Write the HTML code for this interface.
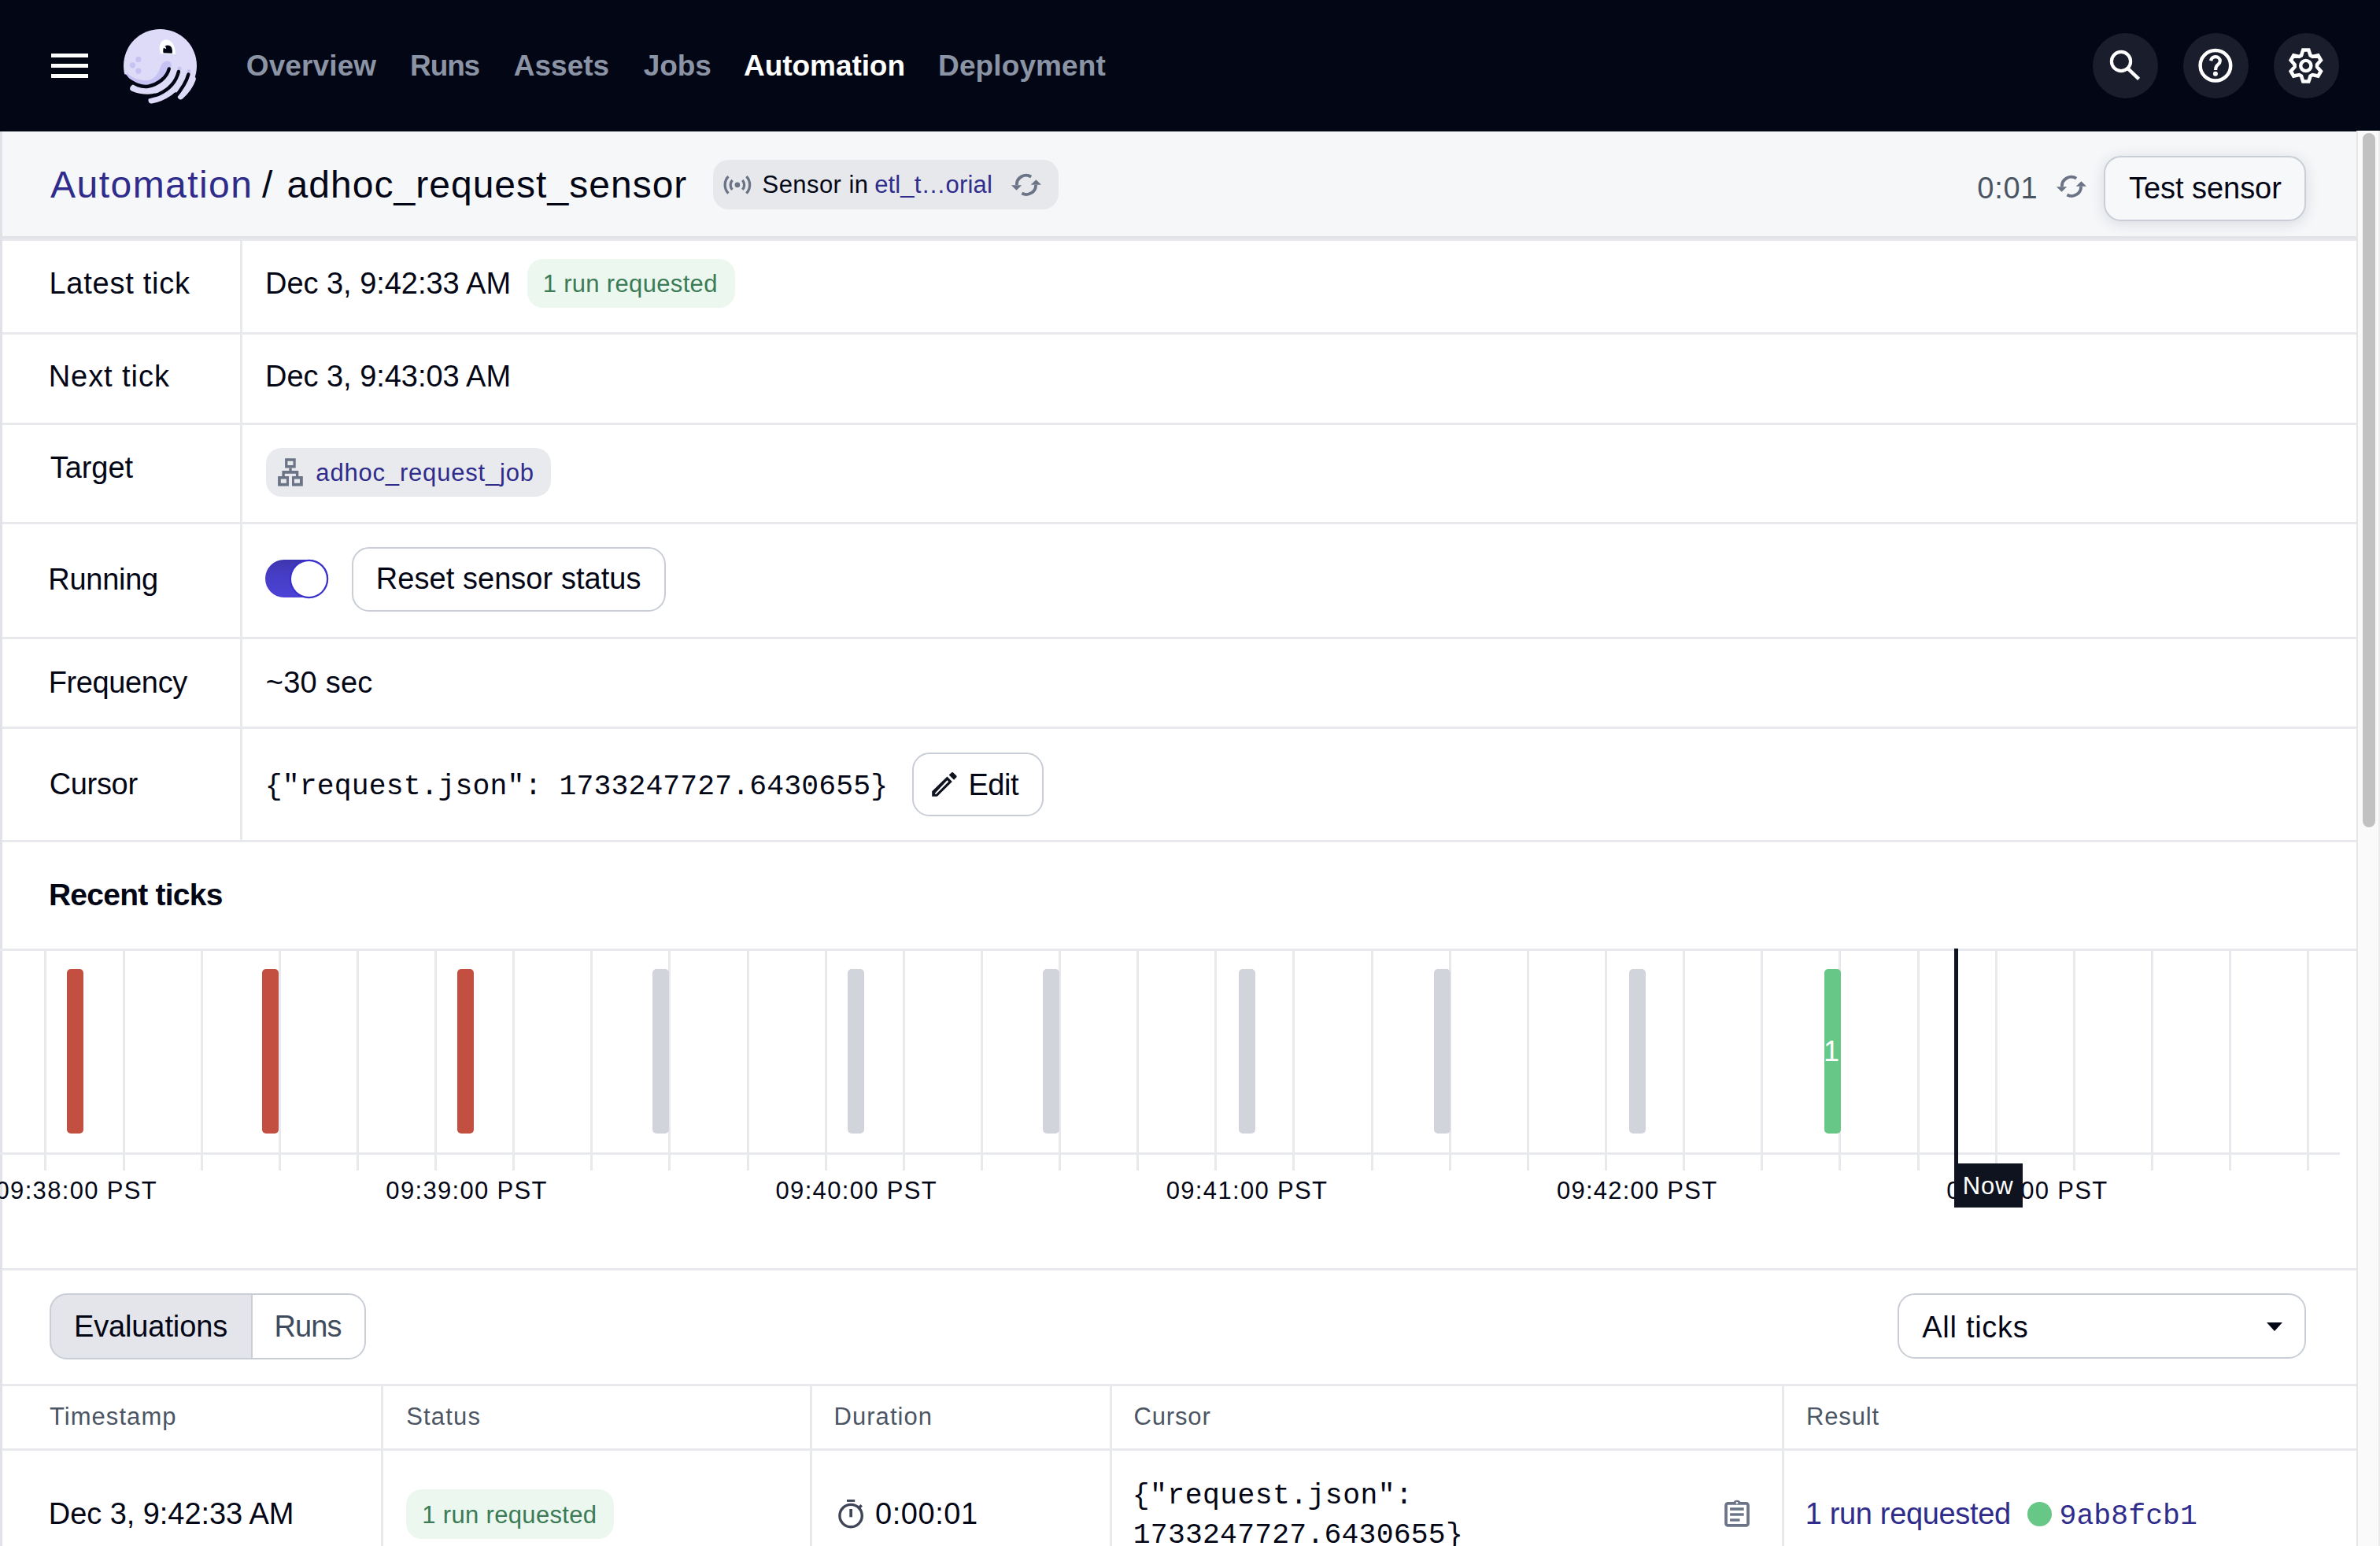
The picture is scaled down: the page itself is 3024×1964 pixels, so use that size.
<!DOCTYPE html>
<html><head><meta charset="utf-8"><title>adhoc_request_sensor</title><style>html,body{margin:0;padding:0;}
body{width:3024px;height:1964px;overflow:hidden;position:relative;background:#fff;}
.b{position:absolute;}
.t{position:absolute;white-space:pre;line-height:1;}
</style></head><body>
<div class="b" style="left:0px;top:0px;width:3024px;height:167px;background:#030615"></div>
<div class="b" style="left:65px;top:68px;width:47px;height:5px;background:#fff"></div>
<div class="b" style="left:65px;top:81px;width:47px;height:5px;background:#fff"></div>
<div class="b" style="left:65px;top:94px;width:47px;height:5px;background:#fff"></div>
<svg class="b" style="left:150px;top:30px" width="110" height="110" viewBox="0 0 110 110">
<circle cx="53.5" cy="53.5" r="46.5" fill="#dddbf8"/>
<path d="M11,62 C18,70 28,72 36,72 C46,72 51,64 54,55 C56,49 60,47.5 63,47.5 C67,47.5 68.5,51 67.5,56 L64.8,56.2 C62,70 50,79 36,79 C24,79 15,74 11,70 Z" fill="#c6c2f3"/>
<circle cx="25.8" cy="45.4" r="3.6" fill="#c6c2f3"/>
<circle cx="18.5" cy="52.8" r="3.6" fill="#c6c2f3"/>
<circle cx="25.8" cy="60.2" r="3.6" fill="#c6c2f3"/>
<circle cx="78" cy="57" r="2.6" fill="#c6c2f3"/>
<circle cx="90" cy="60.5" r="2.6" fill="#c6c2f3"/>
<path d="M0,64 L10,64.5 L17,73 L19,77 L12,86 L0,100 Z M6,82 L17,84 L28,87 L40,88 L48,87.5 L42,95 L36,100 L20,110 L0,110 Z M38,103 L44,99.5 L55.4,95.8 L66.7,90.5 L73,87 L77,90 L76,96 L70,110 L38,110 Z" fill="#030615"/>
<path d="M19,82.3 C24,84.5 30,86 38,86 C50,86 62,79 70,66" stroke="#dddbf8" stroke-width="7.6" fill="none" stroke-linecap="round"/>
<path d="M42.5,97.5 C50,96.5 58,93 66,87.5 C74,81 80,73 84,63" stroke="#dddbf8" stroke-width="8" fill="none" stroke-linecap="round"/>
<path d="M79.5,92.5 C86,87 92,79 95,70.5" stroke="#dddbf8" stroke-width="7.6" fill="none" stroke-linecap="round"/>
<path d="M64.8,57.5 C62,68 52,77 38,79.8 C30,81 22,78 8,68" stroke="#030615" stroke-width="4.4" fill="none" stroke-linecap="round"/>
<path d="M76.9,61 C74,73 66,83 52,89.5 C46,92 40,93 30,95" stroke="#030615" stroke-width="4.4" fill="none" stroke-linecap="round"/>
<path d="M89.4,64.5 C87,74 82,82 72,94" stroke="#030615" stroke-width="4.4" fill="none" stroke-linecap="round"/>
<path d="M54,38.2 C51,31 53,20.6 61,20.6 C68,20.6 73,28 72.8,39 Z" fill="#ffffff"/>
<path d="M57.5,37.3 C56.5,31 58.5,27.4 63,27.4 C67.5,27.4 69.5,31.5 68.8,37.7 Z" fill="#030615"/>
<path d="M57.2,30.5 L60,28.2 L61.3,32.3 Z" fill="#ffffff"/>
</svg>
<div class="b" style="left:2659px;top:42px;width:83px;height:83px;background:#1a1d2b;border-radius:50%"></div>
<div class="b" style="left:2774px;top:42px;width:83px;height:83px;background:#1a1d2b;border-radius:50%"></div>
<div class="b" style="left:2888.5px;top:42px;width:83px;height:83px;background:#1a1d2b;border-radius:50%"></div>
<svg class="b" style="left:2660px;top:45px" width="200" height="80" viewBox="0 0 200 80">
<circle cx="35" cy="33" r="12.1" stroke="#fff" stroke-width="4.2" fill="none"/>
<path d="M44.2,42.6 L57.6,55.4" stroke="#fff" stroke-width="4.4"/>
<circle cx="154.9" cy="38.2" r="19.3" stroke="#fff" stroke-width="4.5" fill="none"/>
<path d="M149.1,32.2 C149.8,29 152.1,27.2 155,27.2 C158.4,27.2 160.8,29.5 160.8,32.4 C160.8,35.6 158,36.9 156.4,38.9 C155.4,40.1 155.1,41.3 155.1,43.9" stroke="#fff" stroke-width="4.2" fill="none"/>
<circle cx="154.9" cy="48.8" r="3.0" fill="#fff"/></svg>
<svg class="b" style="left:2890px;top:45px" width="80" height="80" viewBox="0 0 80 80">
<path d="M33.98,25.44 L36.27,18.51 L43.33,18.51 L45.62,25.44 L48.21,26.93 L55.35,25.45 L58.88,31.56 L54.02,37.01 L54.02,39.99 L58.88,45.44 L55.35,51.55 L48.21,50.07 L45.62,51.56 L43.33,58.49 L36.27,58.49 L33.98,51.56 L31.39,50.07 L24.25,51.55 L20.72,45.44 L25.58,39.99 L25.58,37.01 L20.72,31.56 L24.25,25.45 L31.39,26.93 Z" stroke="#fff" stroke-width="4.6" fill="none"/>
<circle cx="39.8" cy="38.5" r="6.6" stroke="#fff" stroke-width="4.4" fill="none"/></svg>
<div class="b" style="left:0px;top:167px;width:2994px;height:136px;background:#f6f7f9"></div>
<div class="b" style="left:0px;top:300px;width:2994px;height:3px;background:#e1e3e8"></div>
<div class="b" style="left:0px;top:303px;width:2994px;height:3px;background:#e6e8ec"></div>
<div class="b" style="left:906px;top:203px;width:439px;height:63px;background:#e6e8ec;border-radius:20px"></div>
<svg class="b" style="left:910px;top:210px" width="54" height="50" viewBox="0 0 54 50">
<circle cx="26.9" cy="24.9" r="3.3" fill="#6b7486"/>
<path d="M15.4,14.2 A15.7,15.7 0 0 0 15.4,35.6 M38.4,14.2 A15.7,15.7 0 0 1 38.4,35.6 M20.5,18.9 A8.8,8.8 0 0 0 20.5,30.9 M33.3,18.9 A8.8,8.8 0 0 1 33.3,30.9" stroke="#6b7486" stroke-width="3.3" fill="none"/></svg>
<svg class="b" style="left:1271.5px;top:208.1px" width="60" height="50" viewBox="0 0 60 50">
<path d="M38.2,16.6 A12,12 0 0 0 19.8,26.9 M26.4,37.5 A12,12 0 0 0 44.1,26.9" stroke="#6b7486" stroke-width="3.8" fill="none"/>
<path d="M12.9,27.2 L26.2,27.2 L19.5,33.8 Z M37.7,26.7 L51,26.7 L44.4,20.2 Z" fill="#6b7486"/></svg>
<svg class="b" style="left:2600px;top:210px" width="60" height="50" viewBox="0 0 60 50">
<path d="M38.2,16.6 A12,12 0 0 0 19.8,26.9 M26.4,37.5 A12,12 0 0 0 44.1,26.9" stroke="#6b7486" stroke-width="3.8" fill="none"/>
<path d="M12.9,27.2 L26.2,27.2 L19.5,33.8 Z M37.7,26.7 L51,26.7 L44.4,20.2 Z" fill="#6b7486"/></svg>
<div class="b" style="left:2673.4px;top:198.2px;width:256.6px;height:83px;box-sizing:border-box;border:2.6px solid #c9ced6;border-radius:22px;background:#f7f8fa;box-shadow:0 3px 18px rgba(30,40,70,0.14)"></div>
<div class="b" style="left:2994px;top:166px;width:30px;height:1798px;background:#fafafa;border-left:2px solid #e6e6e6;border-right:2px solid #ebebeb;box-sizing:border-box"></div>
<div class="b" style="left:3002px;top:169px;width:16px;height:882px;background:#c1c1c1;border-radius:8px"></div>
<div class="b" style="left:0px;top:167px;width:2.7px;height:1797px;background:#e0e2e7"></div>
<div class="b" style="left:3px;top:422px;width:2991px;height:3px;background:#e8e9ed"></div>
<div class="b" style="left:3px;top:537px;width:2991px;height:3px;background:#e8e9ed"></div>
<div class="b" style="left:3px;top:663px;width:2991px;height:3px;background:#e8e9ed"></div>
<div class="b" style="left:3px;top:809px;width:2991px;height:3px;background:#e8e9ed"></div>
<div class="b" style="left:3px;top:923px;width:2991px;height:3px;background:#e8e9ed"></div>
<div class="b" style="left:3px;top:1067px;width:2991px;height:3px;background:#e8e9ed"></div>
<div class="b" style="left:305px;top:303px;width:3px;height:765px;background:#e8e9ed"></div>
<div class="b" style="left:670px;top:328.8px;width:264px;height:62px;background:#ebf7ef;border-radius:20px"></div>
<div class="b" style="left:338.2px;top:569px;width:362px;height:61.6px;background:#e9eaee;border-radius:20px"></div>
<svg class="b" style="left:345px;top:575px" width="50" height="50" viewBox="0 0 50 50">
<path fill-rule="evenodd" fill="#6b7486" d="M17.1,7.3 H30.7 V19.6 H17.1 Z M20.4,10.8 V16 H27.5 V10.8 Z M8.1,30.1 H22 V42.4 H8.1 Z M11.8,33.6 V38.8 H18.9 V33.6 Z M26,30.1 H39.8 V42.4 H26 Z M28.9,33.6 V38.8 H36 V33.6 Z"/>
<path fill="#6b7486" d="M22.3,19.4 H25.7 V23.1 H34.3 V30.3 H30.9 V26.7 H16.8 V30.3 H13.4 V23.1 H22.3 Z"/></svg>
<div class="b" style="left:336.8px;top:710.9px;width:80.2px;height:48.6px;background:linear-gradient(180deg,#3d35ae 0%,#463dc6 40%,#4c42d6 100%);border-radius:25px"></div>
<div class="b" style="left:369.8px;top:712.9px;width:45px;height:45px;background:#fff;border-radius:50%;box-shadow:0 0 0 2.2px #3a30cc"></div>
<div class="b" style="left:447.4px;top:694.5px;width:398.3px;height:82px;box-sizing:border-box;border:2.6px solid #c9ced6;border-radius:22px;background:#fff"></div>
<div class="b" style="left:1158.9px;top:955.6px;width:167.6px;height:81.8px;box-sizing:border-box;border:2.6px solid #c9ced6;border-radius:22px;background:#fff"></div>
<svg class="b" style="left:1175px;top:975px" width="50" height="50" viewBox="0 0 50 50">
<path fill-rule="evenodd" fill="#0f1320" d="M9.2,36.7 V30.2 L28.5,11.5 L34.8,17.9 L15.8,36.7 Z M12.8,33.1 L28.5,16.3 L30.2,17.9 L14,34.2 Z"/>
<path fill="#0f1320" d="M30.7,9.6 L34.3,6.2 Q35.1,5.6 35.9,6.3 L40.3,10.6 Q40.9,11.4 40.3,12.2 L37.1,15.8 Z"/></svg>
<div class="b" style="left:0px;top:1205px;width:2994px;height:3px;background:#e8e9ed"></div>
<div class="b" style="left:0px;top:1464px;width:2973px;height:3px;background:#e8e9ed"></div>
<div class="b" style="left:56px;top:1206px;width:3px;height:281px;background:#e8e9ed"></div>
<div class="b" style="left:156px;top:1206px;width:3px;height:281px;background:#e8e9ed"></div>
<div class="b" style="left:255px;top:1206px;width:3px;height:281px;background:#e8e9ed"></div>
<div class="b" style="left:354px;top:1206px;width:3px;height:281px;background:#e8e9ed"></div>
<div class="b" style="left:453px;top:1206px;width:3px;height:281px;background:#e8e9ed"></div>
<div class="b" style="left:552px;top:1206px;width:3px;height:281px;background:#e8e9ed"></div>
<div class="b" style="left:651px;top:1206px;width:3px;height:281px;background:#e8e9ed"></div>
<div class="b" style="left:750px;top:1206px;width:3px;height:281px;background:#e8e9ed"></div>
<div class="b" style="left:849px;top:1206px;width:3px;height:281px;background:#e8e9ed"></div>
<div class="b" style="left:949px;top:1206px;width:3px;height:281px;background:#e8e9ed"></div>
<div class="b" style="left:1048px;top:1206px;width:3px;height:281px;background:#e8e9ed"></div>
<div class="b" style="left:1147px;top:1206px;width:3px;height:281px;background:#e8e9ed"></div>
<div class="b" style="left:1246px;top:1206px;width:3px;height:281px;background:#e8e9ed"></div>
<div class="b" style="left:1345px;top:1206px;width:3px;height:281px;background:#e8e9ed"></div>
<div class="b" style="left:1444px;top:1206px;width:3px;height:281px;background:#e8e9ed"></div>
<div class="b" style="left:1543px;top:1206px;width:3px;height:281px;background:#e8e9ed"></div>
<div class="b" style="left:1642px;top:1206px;width:3px;height:281px;background:#e8e9ed"></div>
<div class="b" style="left:1742px;top:1206px;width:3px;height:281px;background:#e8e9ed"></div>
<div class="b" style="left:1841px;top:1206px;width:3px;height:281px;background:#e8e9ed"></div>
<div class="b" style="left:1940px;top:1206px;width:3px;height:281px;background:#e8e9ed"></div>
<div class="b" style="left:2039px;top:1206px;width:3px;height:281px;background:#e8e9ed"></div>
<div class="b" style="left:2138px;top:1206px;width:3px;height:281px;background:#e8e9ed"></div>
<div class="b" style="left:2237px;top:1206px;width:3px;height:281px;background:#e8e9ed"></div>
<div class="b" style="left:2336px;top:1206px;width:3px;height:281px;background:#e8e9ed"></div>
<div class="b" style="left:2436px;top:1206px;width:3px;height:281px;background:#e8e9ed"></div>
<div class="b" style="left:2535px;top:1206px;width:3px;height:281px;background:#e8e9ed"></div>
<div class="b" style="left:2634px;top:1206px;width:3px;height:281px;background:#e8e9ed"></div>
<div class="b" style="left:2733px;top:1206px;width:3px;height:281px;background:#e8e9ed"></div>
<div class="b" style="left:2832px;top:1206px;width:3px;height:281px;background:#e8e9ed"></div>
<div class="b" style="left:2931px;top:1206px;width:3px;height:281px;background:#e8e9ed"></div>
<div class="b" style="left:84.9px;top:1231px;width:21px;height:209px;background:#c24f3f;border-radius:5px"></div>
<div class="b" style="left:333.0px;top:1231px;width:21px;height:209px;background:#c24f3f;border-radius:5px"></div>
<div class="b" style="left:581.1px;top:1231px;width:21px;height:209px;background:#c24f3f;border-radius:5px"></div>
<div class="b" style="left:829.2px;top:1231px;width:21px;height:209px;background:#d1d4db;border-radius:5px"></div>
<div class="b" style="left:1077.3px;top:1231px;width:21px;height:209px;background:#d1d4db;border-radius:5px"></div>
<div class="b" style="left:1325.4px;top:1231px;width:21px;height:209px;background:#d1d4db;border-radius:5px"></div>
<div class="b" style="left:1573.5px;top:1231px;width:21px;height:209px;background:#d1d4db;border-radius:5px"></div>
<div class="b" style="left:1821.6px;top:1231px;width:21px;height:209px;background:#d1d4db;border-radius:5px"></div>
<div class="b" style="left:2069.7px;top:1231px;width:21px;height:209px;background:#d1d4db;border-radius:5px"></div>
<div class="b" style="left:2317.8px;top:1231px;width:21px;height:209px;background:#67c787;border-radius:5px"></div>
<div class="t" style="left:2317px;top:1318px;font-family:'Liberation Sans';font-size:36px;color:#fff">1</div>
<div class="b" style="left:2482.8px;top:1205px;width:5.2px;height:273px;background:#0f1320;z-index:2"></div>
<div class="b" style="left:2482.8px;top:1477.6px;width:87px;height:56px;background:#0f1320;z-index:2"></div>
<div class="b" style="left:3px;top:1611px;width:2991px;height:3px;background:#e8e9ed"></div>
<div class="b" style="left:63.2px;top:1643px;width:402.3px;height:84px;box-sizing:border-box;border:2.6px solid #c9ced6;border-radius:22px;background:linear-gradient(90deg,#e3e5ea 0,#e3e5ea 253.5px,#c9ced6 253.5px,#c9ced6 256.3px,#fff 256.3px)"></div>
<div class="b" style="left:2410.6px;top:1643.3px;width:519.4px;height:83px;box-sizing:border-box;border:2.6px solid #c9ced6;border-radius:22px;background:#fff"></div>
<svg class="b" style="left:2878px;top:1678px" width="24" height="16" viewBox="0 0 24 16"><path d="M2,2 H22 L12,13 Z" fill="#030615"/></svg>
<div class="b" style="left:3px;top:1758px;width:2991px;height:3px;background:#e8e9ed"></div>
<div class="b" style="left:3px;top:1840px;width:2991px;height:3px;background:#e8e9ed"></div>
<div class="b" style="left:484px;top:1759px;width:3px;height:205px;background:#e8e9ed"></div>
<div class="b" style="left:1029px;top:1759px;width:3px;height:205px;background:#e8e9ed"></div>
<div class="b" style="left:1410px;top:1759px;width:3px;height:205px;background:#e8e9ed"></div>
<div class="b" style="left:2264px;top:1759px;width:3px;height:205px;background:#e8e9ed"></div>
<div class="b" style="left:516.1px;top:1891.8px;width:263.7px;height:63px;background:#ebf7ef;border-radius:20px"></div>
<svg class="b" style="left:1055px;top:1895px" width="50" height="50" viewBox="0 0 50 50">
<circle cx="26.1" cy="30.6" r="14.2" stroke="#3f4657" stroke-width="3.4" fill="none"/>
<rect x="21" y="10" width="10.2" height="2.9" fill="#3f4657"/>
<rect x="24.3" y="22" width="3.7" height="10.3" fill="#3f4657"/>
<path d="M38.5,16 L40.9,18.6 L38.3,21.3 L35.6,18.8 Z" fill="#3f4657"/></svg>
<svg class="b" style="left:2180px;top:1895px" width="50" height="50" viewBox="0 0 50 50">
<rect x="13.05" y="14.95" width="28" height="28" rx="2.5" stroke="#6b7486" stroke-width="3.7" fill="none"/>
<path d="M22,14.5 A5.2,5.2 0 0 1 32,14.5 Z" fill="#6b7486"/>
<circle cx="27" cy="14.2" r="1.3" fill="#fff"/>
<rect x="18.1" y="20.2" width="17.6" height="3.6" fill="#6b7486"/>
<rect x="18.1" y="27.3" width="17.6" height="3.4" fill="#6b7486"/>
<rect x="18.1" y="34.3" width="12.5" height="3.4" fill="#6b7486"/></svg>
<div class="b" style="left:2575.6px;top:1908px;width:31px;height:31px;background:#67c787;border-radius:50%"></div>
<div class="t" id="nav1" style="left:312.78px;top:65.15px;font-family:'Liberation Sans', sans-serif;font-weight:700;font-size:37px;color:#8b94a5;letter-spacing:0.114px">Overview</div>
<div class="t" id="nav2" style="left:521.08px;top:65.15px;font-family:'Liberation Sans', sans-serif;font-weight:700;font-size:37px;color:#8b94a5;letter-spacing:-1.133px">Runs</div>
<div class="t" id="nav3" style="left:652.78px;top:65.15px;font-family:'Liberation Sans', sans-serif;font-weight:700;font-size:37px;color:#8b94a5;letter-spacing:0.000px">Assets</div>
<div class="t" id="nav4" style="left:817.78px;top:65.15px;font-family:'Liberation Sans', sans-serif;font-weight:700;font-size:37px;color:#8b94a5;letter-spacing:-0.067px">Jobs</div>
<div class="t" id="nav5" style="left:945.08px;top:65.15px;font-family:'Liberation Sans', sans-serif;font-weight:700;font-size:37px;color:#ffffff;letter-spacing:-0.067px">Automation</div>
<div class="t" id="nav6" style="left:1192.08px;top:65.15px;font-family:'Liberation Sans', sans-serif;font-weight:700;font-size:37px;color:#8b94a5;letter-spacing:0.111px">Deployment</div>
<div class="t" id="bc1" style="left:64.12px;top:211.20px;font-family:'Liberation Sans', sans-serif;font-weight:400;font-size:48px;color:#2f2c8c;letter-spacing:1.444px">Automation</div>
<div class="t" id="bc2" style="left:333.12px;top:211.20px;font-family:'Liberation Sans', sans-serif;font-weight:400;font-size:48px;color:#030615;letter-spacing:9.000px">/</div>
<div class="t" id="bc3" style="left:364.62px;top:211.20px;font-family:'Liberation Sans', sans-serif;font-weight:400;font-size:48px;color:#030615;letter-spacing:1.021px">adhoc_request_sensor</div>
<div class="t" id="tag1" style="left:968.54px;top:219.45px;font-family:'Liberation Sans', sans-serif;font-weight:400;font-size:31px;color:#030615;letter-spacing:0.438px">Sensor in</div>
<div class="t" id="tag2" style="left:1111.14px;top:219.45px;font-family:'Liberation Sans', sans-serif;font-weight:400;font-size:31px;color:#2f2c8c;letter-spacing:0.150px">etl_t…orial</div>
<div class="t" id="timer" style="left:2512.22px;top:219.70px;font-family:'Liberation Sans', sans-serif;font-weight:400;font-size:38px;color:#4b5563;letter-spacing:0.800px">0:01</div>
<div class="t" id="testbtn" style="left:2705.12px;top:219.70px;font-family:'Liberation Sans', sans-serif;font-weight:400;font-size:38px;color:#030615;letter-spacing:-0.060px">Test sensor</div>
<div class="t" id="l1" style="left:62.42px;top:340.50px;font-family:'Liberation Sans', sans-serif;font-weight:400;font-size:38px;color:#030615;letter-spacing:0.760px">Latest tick</div>
<div class="t" id="v1" style="left:337.02px;top:340.50px;font-family:'Liberation Sans', sans-serif;font-weight:400;font-size:38px;color:#030615;letter-spacing:-0.037px">Dec 3, 9:42:33 AM</div>
<div class="t" id="g1" style="left:689.64px;top:344.65px;font-family:'Liberation Sans', sans-serif;font-weight:400;font-size:31px;color:#3b7b55;letter-spacing:0.329px">1 run requested</div>
<div class="t" id="l2" style="left:61.72px;top:459.40px;font-family:'Liberation Sans', sans-serif;font-weight:400;font-size:38px;color:#030615;letter-spacing:0.938px">Next tick</div>
<div class="t" id="v2" style="left:337.02px;top:459.40px;font-family:'Liberation Sans', sans-serif;font-weight:400;font-size:38px;color:#030615;letter-spacing:-0.037px">Dec 3, 9:43:03 AM</div>
<div class="t" id="l3" style="left:63.72px;top:574.70px;font-family:'Liberation Sans', sans-serif;font-weight:400;font-size:38px;color:#030615;letter-spacing:-0.060px">Target</div>
<div class="t" id="v3" style="left:401.34px;top:584.65px;font-family:'Liberation Sans', sans-serif;font-weight:400;font-size:31px;color:#2f2c8c;letter-spacing:0.812px">adhoc_request_job</div>
<div class="t" id="l4" style="left:61.22px;top:717.10px;font-family:'Liberation Sans', sans-serif;font-weight:400;font-size:38px;color:#030615;letter-spacing:-0.267px">Running</div>
<div class="t" id="v4" style="left:477.72px;top:716.20px;font-family:'Liberation Sans', sans-serif;font-weight:400;font-size:38px;color:#030615;letter-spacing:0.056px">Reset sensor status</div>
<div class="t" id="l5" style="left:61.72px;top:847.70px;font-family:'Liberation Sans', sans-serif;font-weight:400;font-size:38px;color:#030615;letter-spacing:-0.375px">Frequency</div>
<div class="t" id="v5" style="left:337.72px;top:847.70px;font-family:'Liberation Sans', sans-serif;font-weight:400;font-size:38px;color:#030615;letter-spacing:0.233px">~30 sec</div>
<div class="t" id="l6" style="left:62.72px;top:977.30px;font-family:'Liberation Sans', sans-serif;font-weight:400;font-size:38px;color:#030615;letter-spacing:-0.340px">Cursor</div>
<div class="t" id="v6" style="left:336.82px;top:982.34px;font-family:'Liberation Mono', monospace;font-weight:400;font-size:36.4px;color:#030615;letter-spacing:0.143px">{"request.json": 1733247727.6430655}</div>
<div class="t" id="v6b" style="left:1230.42px;top:977.70px;font-family:'Liberation Sans', sans-serif;font-weight:400;font-size:38px;color:#030615;letter-spacing:-0.467px">Edit</div>
<div class="t" id="rt" style="left:61.96px;top:1117.45px;font-family:'Liberation Sans', sans-serif;font-weight:700;font-size:39px;color:#030615;letter-spacing:-0.764px">Recent ticks</div>
<div class="t" id="cl0" style="left:-5.46px;top:1496.95px;font-family:'Liberation Sans', sans-serif;font-weight:400;font-size:31px;color:#030615;letter-spacing:1.327px">09:38:00 PST</div>
<div class="t" id="cl1" style="left:490.34px;top:1496.95px;font-family:'Liberation Sans', sans-serif;font-weight:400;font-size:31px;color:#030615;letter-spacing:1.327px">09:39:00 PST</div>
<div class="t" id="cl2" style="left:985.54px;top:1496.95px;font-family:'Liberation Sans', sans-serif;font-weight:400;font-size:31px;color:#030615;letter-spacing:1.327px">09:40:00 PST</div>
<div class="t" id="cl3" style="left:1481.74px;top:1496.95px;font-family:'Liberation Sans', sans-serif;font-weight:400;font-size:31px;color:#030615;letter-spacing:1.327px">09:41:00 PST</div>
<div class="t" id="cl4" style="left:1977.94px;top:1496.95px;font-family:'Liberation Sans', sans-serif;font-weight:400;font-size:31px;color:#030615;letter-spacing:1.236px">09:42:00 PST</div>
<div class="t" id="cl5" style="left:2473.14px;top:1496.95px;font-family:'Liberation Sans', sans-serif;font-weight:400;font-size:31px;color:#030615;letter-spacing:1.327px">09:43:00 PST</div>
<div class="t" id="now" style="left:2493.64px;top:1490.85px;font-family:'Liberation Sans', sans-serif;font-weight:400;font-size:31px;color:#ffffff;letter-spacing:1.000px;z-index:3">Now</div>
<div class="t" id="seg1" style="left:93.92px;top:1665.50px;font-family:'Liberation Sans', sans-serif;font-weight:400;font-size:38px;color:#030615;letter-spacing:-0.120px">Evaluations</div>
<div class="t" id="seg2" style="left:348.42px;top:1665.50px;font-family:'Liberation Sans', sans-serif;font-weight:400;font-size:38px;color:#3f4a5c;letter-spacing:-0.867px">Runs</div>
<div class="t" id="sel" style="left:2442.32px;top:1666.50px;font-family:'Liberation Sans', sans-serif;font-weight:400;font-size:38px;color:#030615;letter-spacing:0.700px">All ticks</div>
<div class="t" id="th1" style="left:62.94px;top:1784.05px;font-family:'Liberation Sans', sans-serif;font-weight:400;font-size:31px;color:#4b5563;letter-spacing:1.050px">Timestamp</div>
<div class="t" id="th2" style="left:516.14px;top:1784.05px;font-family:'Liberation Sans', sans-serif;font-weight:400;font-size:31px;color:#4b5563;letter-spacing:1.200px">Status</div>
<div class="t" id="th3" style="left:1059.54px;top:1784.05px;font-family:'Liberation Sans', sans-serif;font-weight:400;font-size:31px;color:#4b5563;letter-spacing:1.043px">Duration</div>
<div class="t" id="th4" style="left:1440.44px;top:1784.05px;font-family:'Liberation Sans', sans-serif;font-weight:400;font-size:31px;color:#4b5563;letter-spacing:0.860px">Cursor</div>
<div class="t" id="th5" style="left:2294.94px;top:1784.05px;font-family:'Liberation Sans', sans-serif;font-weight:400;font-size:31px;color:#4b5563;letter-spacing:0.860px">Result</div>
<div class="t" id="r1" style="left:61.82px;top:1903.50px;font-family:'Liberation Sans', sans-serif;font-weight:400;font-size:38px;color:#030615;letter-spacing:-0.062px">Dec 3, 9:42:33 AM</div>
<div class="t" id="r2" style="left:536.34px;top:1908.95px;font-family:'Liberation Sans', sans-serif;font-weight:400;font-size:31px;color:#3b7b55;letter-spacing:0.329px">1 run requested</div>
<div class="t" id="r3" style="left:1112.02px;top:1903.70px;font-family:'Liberation Sans', sans-serif;font-weight:400;font-size:38px;color:#030615;letter-spacing:0.567px">0:00:01</div>
<div class="t" id="r4a" style="left:1438.82px;top:1882.54px;font-family:'Liberation Mono', monospace;font-weight:400;font-size:36.4px;color:#030615;letter-spacing:0.440px">{"request.json":</div>
<div class="t" id="r4b" style="left:1439.82px;top:1933.34px;font-family:'Liberation Mono', monospace;font-weight:400;font-size:36.4px;color:#030615;letter-spacing:0.222px">1733247727.6430655}</div>
<div class="t" id="r5" style="left:2293.72px;top:1904.10px;font-family:'Liberation Sans', sans-serif;font-weight:400;font-size:38px;color:#2f2c8c;letter-spacing:-0.343px">1 run requested</div>
<div class="t" id="r6" style="left:2616.52px;top:1908.74px;font-family:'Liberation Mono', monospace;font-weight:400;font-size:36.4px;color:#2f2c8c;letter-spacing:0.086px">9ab8fcb1</div>
</body></html>
